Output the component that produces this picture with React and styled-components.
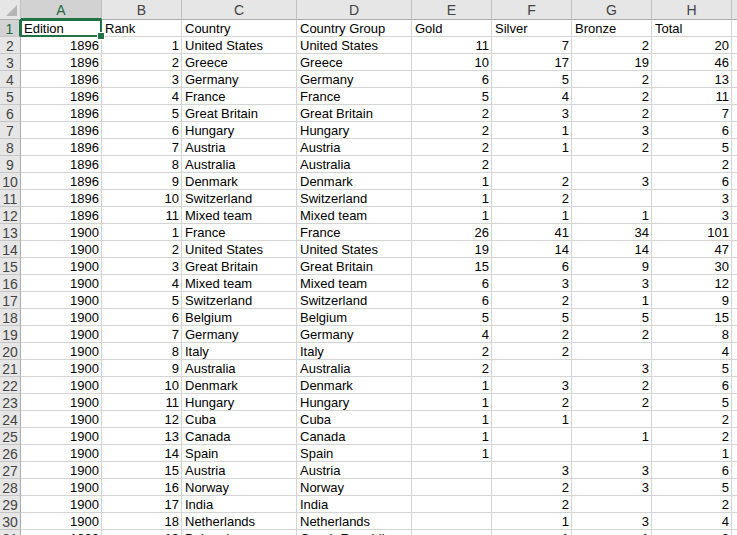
import styled, { createGlobalStyle } from "styled-components";

const columns = [
  { key: "A", width: 81 },
  { key: "B", width: 80 },
  { key: "C", width: 115 },
  { key: "D", width: 115 },
  { key: "E", width: 80 },
  { key: "F", width: 80 },
  { key: "G", width: 80 },
  { key: "H", width: 80 },
  { key: "I", width: 80 },
];

const headerRow = ["Edition", "Rank", "Country", "Country Group", "Gold", "Silver", "Bronze", "Total"];

const rows = [
  [1896, 1, "United States", "United States", 11, 7, 2, 20],
  [1896, 2, "Greece", "Greece", 10, 17, 19, 46],
  [1896, 3, "Germany", "Germany", 6, 5, 2, 13],
  [1896, 4, "France", "France", 5, 4, 2, 11],
  [1896, 5, "Great Britain", "Great Britain", 2, 3, 2, 7],
  [1896, 6, "Hungary", "Hungary", 2, 1, 3, 6],
  [1896, 7, "Austria", "Austria", 2, 1, 2, 5],
  [1896, 8, "Australia", "Australia", 2, "", "", 2],
  [1896, 9, "Denmark", "Denmark", 1, 2, 3, 6],
  [1896, 10, "Switzerland", "Switzerland", 1, 2, "", 3],
  [1896, 11, "Mixed team", "Mixed team", 1, 1, 1, 3],
  [1900, 1, "France", "France", 26, 41, 34, 101],
  [1900, 2, "United States", "United States", 19, 14, 14, 47],
  [1900, 3, "Great Britain", "Great Britain", 15, 6, 9, 30],
  [1900, 4, "Mixed team", "Mixed team", 6, 3, 3, 12],
  [1900, 5, "Switzerland", "Switzerland", 6, 2, 1, 9],
  [1900, 6, "Belgium", "Belgium", 5, 5, 5, 15],
  [1900, 7, "Germany", "Germany", 4, 2, 2, 8],
  [1900, 8, "Italy", "Italy", 2, 2, "", 4],
  [1900, 9, "Australia", "Australia", 2, "", 3, 5],
  [1900, 10, "Denmark", "Denmark", 1, 3, 2, 6],
  [1900, 11, "Hungary", "Hungary", 1, 2, 2, 5],
  [1900, 12, "Cuba", "Cuba", 1, 1, "", 2],
  [1900, 13, "Canada", "Canada", 1, "", 1, 2],
  [1900, 14, "Spain", "Spain", 1, "", "", 1],
  [1900, 15, "Austria", "Austria", "", 3, 3, 6],
  [1900, 16, "Norway", "Norway", "", 2, 3, 5],
  [1900, 17, "India", "India", "", 2, "", 2],
  [1900, 18, "Netherlands", "Netherlands", "", 1, 3, 4],
  [1900, 19, "Bohemia", "Czech Republic", "", 1, 1, 2],
];

const GlobalStyle = createGlobalStyle`
  html, body {
    margin: 0;
    padding: 0;
    background: #fff;
    overflow: hidden;
  }
  * {
    box-sizing: border-box;
  }
`;

const Sheet = styled.div`
  width: 737px;
  height: 535px;
  overflow: hidden;
  display: grid;
  grid-template-columns: 21px ${columns.map((c) => `${c.width}px`).join(" ")};
  grid-auto-rows: 17px;
  grid-template-rows: 20px;
  font-family: "Liberation Sans", Arial, sans-serif;
  font-size: 13px;
  color: #000;
`;

const Corner = styled.div`
  position: relative;
  background: #e6e6e6;
  border-right: 1px solid #bfbfbf;
  border-bottom: 1px solid #ababab;
  &::after {
    content: "";
    position: absolute;
    right: 3px;
    bottom: 3px;
    width: 0;
    height: 0;
    border-left: 11px solid transparent;
    border-bottom: 11px solid #b5b5b5;
  }
`;

const ColHead = styled.div`
  background: ${(p) => (p.$active ? "#d2d2d2" : "#e6e6e6")};
  color: ${(p) => (p.$active ? "#1e6b3f" : "#444")};
  border-right: 1px solid #bfbfbf;
  border-bottom: ${(p) => (p.$active ? "2px solid #217346" : "1px solid #ababab")};
  display: flex;
  align-items: center;
  justify-content: center;
  font-size: 14px;
  padding-top: ${(p) => (p.$active ? "2px" : "1px")};
`;

const RowHead = styled.div`
  background: ${(p) => (p.$active ? "#d2d2d2" : "#e6e6e6")};
  color: ${(p) => (p.$active ? "#1e6b3f" : "#444")};
  border-right: ${(p) => (p.$active ? "2px solid #217346" : "1px solid #ababab")};
  border-bottom: 1px solid #c6c6c6;
  display: flex;
  align-items: center;
  justify-content: center;
  font-size: 14px;
  line-height: 16px;
  padding-top: 2px;
`;

const Cell = styled.div`
  position: relative;
  border-right: 1px solid #d4d4d4;
  border-bottom: 1px solid #d4d4d4;
  padding: 1px 2px 0 3px;
  line-height: 16px;
  white-space: nowrap;
  text-align: ${(p) => p.$align};
  background: #fff;
`;

const Selected = styled(Cell)`
  z-index: 2;
  background: transparent;
  &::after {
    content: "";
    position: absolute;
    left: -1px;
    top: -1px;
    right: -1px;
    bottom: -1px;
    border: 2px solid #217346;
    pointer-events: none;
  }
  &::before {
    content: "";
    position: absolute;
    right: -4px;
    bottom: -4px;
    width: 6px;
    height: 6px;
    background: #217346;
    border: 1px solid #fff;
    z-index: 3;
  }
`;

function Row({ n, values }) {
  return (
    <>
      <RowHead>{n}</RowHead>
      {values.map((v, i) => (
        <Cell key={i} $align={typeof v === "number" ? "right" : "left"}>
          {v}
        </Cell>
      ))}
      <Cell $align="left" />
    </>
  );
}

export default function App() {
  return (
    <>
      <GlobalStyle />
      <Sheet>
        <Corner />
        {columns.map((c) => (
          <ColHead key={c.key} $active={c.key === "A"}>
            {c.key}
          </ColHead>
        ))}
        <RowHead $active>1</RowHead>
        {headerRow.map((t, i) =>
          i === 0 ? (
            <Selected key={i} $align="left">
              {t}
            </Selected>
          ) : (
            <Cell key={i} $align="left">
              {t}
            </Cell>
          )
        )}
        <Cell $align="left" />
        {rows.map((r, ri) => (
          <Row key={ri} n={ri + 2} values={r} />
        ))}
      </Sheet>
    </>
  );
}
